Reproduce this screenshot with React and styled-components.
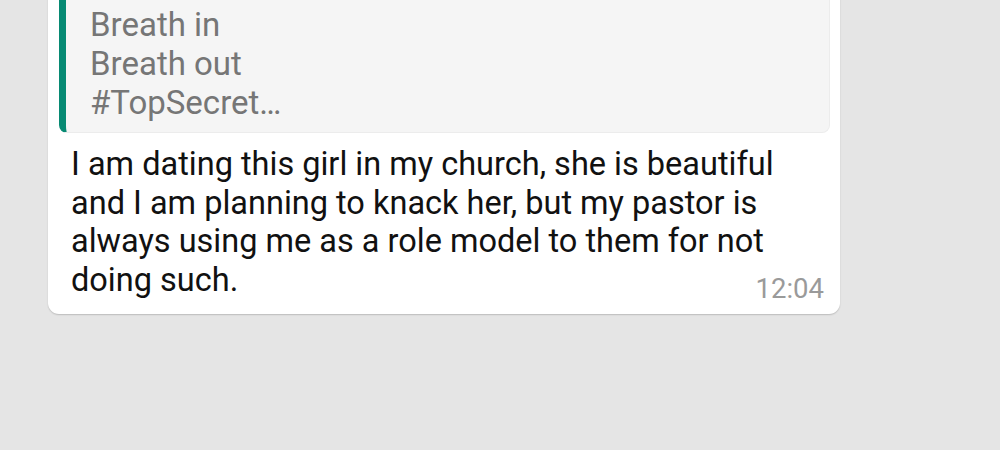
import React from "react";
import styled, { createGlobalStyle } from "styled-components";

const Global = createGlobalStyle`
  html, body { margin: 0; padding: 0; background: #e5e5e5; overflow: hidden; }
  body { font-family: Roboto, "Noto Sans", sans-serif; }
`;

const Screen = styled.div`
  width: 1000px;
  height: 450px;
  background: #e5e5e5;
  overflow: hidden;
  padding-left: 48px;
  box-sizing: border-box;
`;

const Bubble = styled.div`
  width: 792px;
  margin-top: -54px;
  background: #fff;
  border-radius: 11px;
  box-shadow: 0 1px 1.5px rgba(0, 0, 0, 0.18);
  padding: 10px 16px 14px 11px;
  box-sizing: border-box;
  display: flex;
  flex-direction: column;
`;

const Quote = styled.div`
  background: #f5f5f5;
  border: 1px solid #ececec;
  border-left: 7px solid #078a73;
  border-radius: 8px;
  margin-right: -6px;
  padding: 48px 20px 10px 24px;
  color: #767676;
  font-size: 33px;
  line-height: 39px;
`;

const Text = styled.div`
  margin-top: 12px;
  padding: 0 24px 0 12px;
  color: #111;
  font-size: 32.5px;
  line-height: 38.5px;
`;

const Time = styled.div`
  align-self: flex-end;
  margin-top: -21px;
  color: #9a9a9a;
  font-size: 27.5px;
  line-height: 22px;
`;

export default function App() {
  return (
    <>
      <Global />
      <Screen>
        <Bubble>
          <Quote>
            Breath in
            <br />
            Breath out
            <br />
            #TopSecret…
          </Quote>
          <Text>
            I am dating this girl in my church, she is beautiful and I am planning to knack her, but my pastor is
            always using me as a role model to them for not doing such.
          </Text>
          <Time>12:04</Time>
        </Bubble>
      </Screen>
    </>
  );
}
